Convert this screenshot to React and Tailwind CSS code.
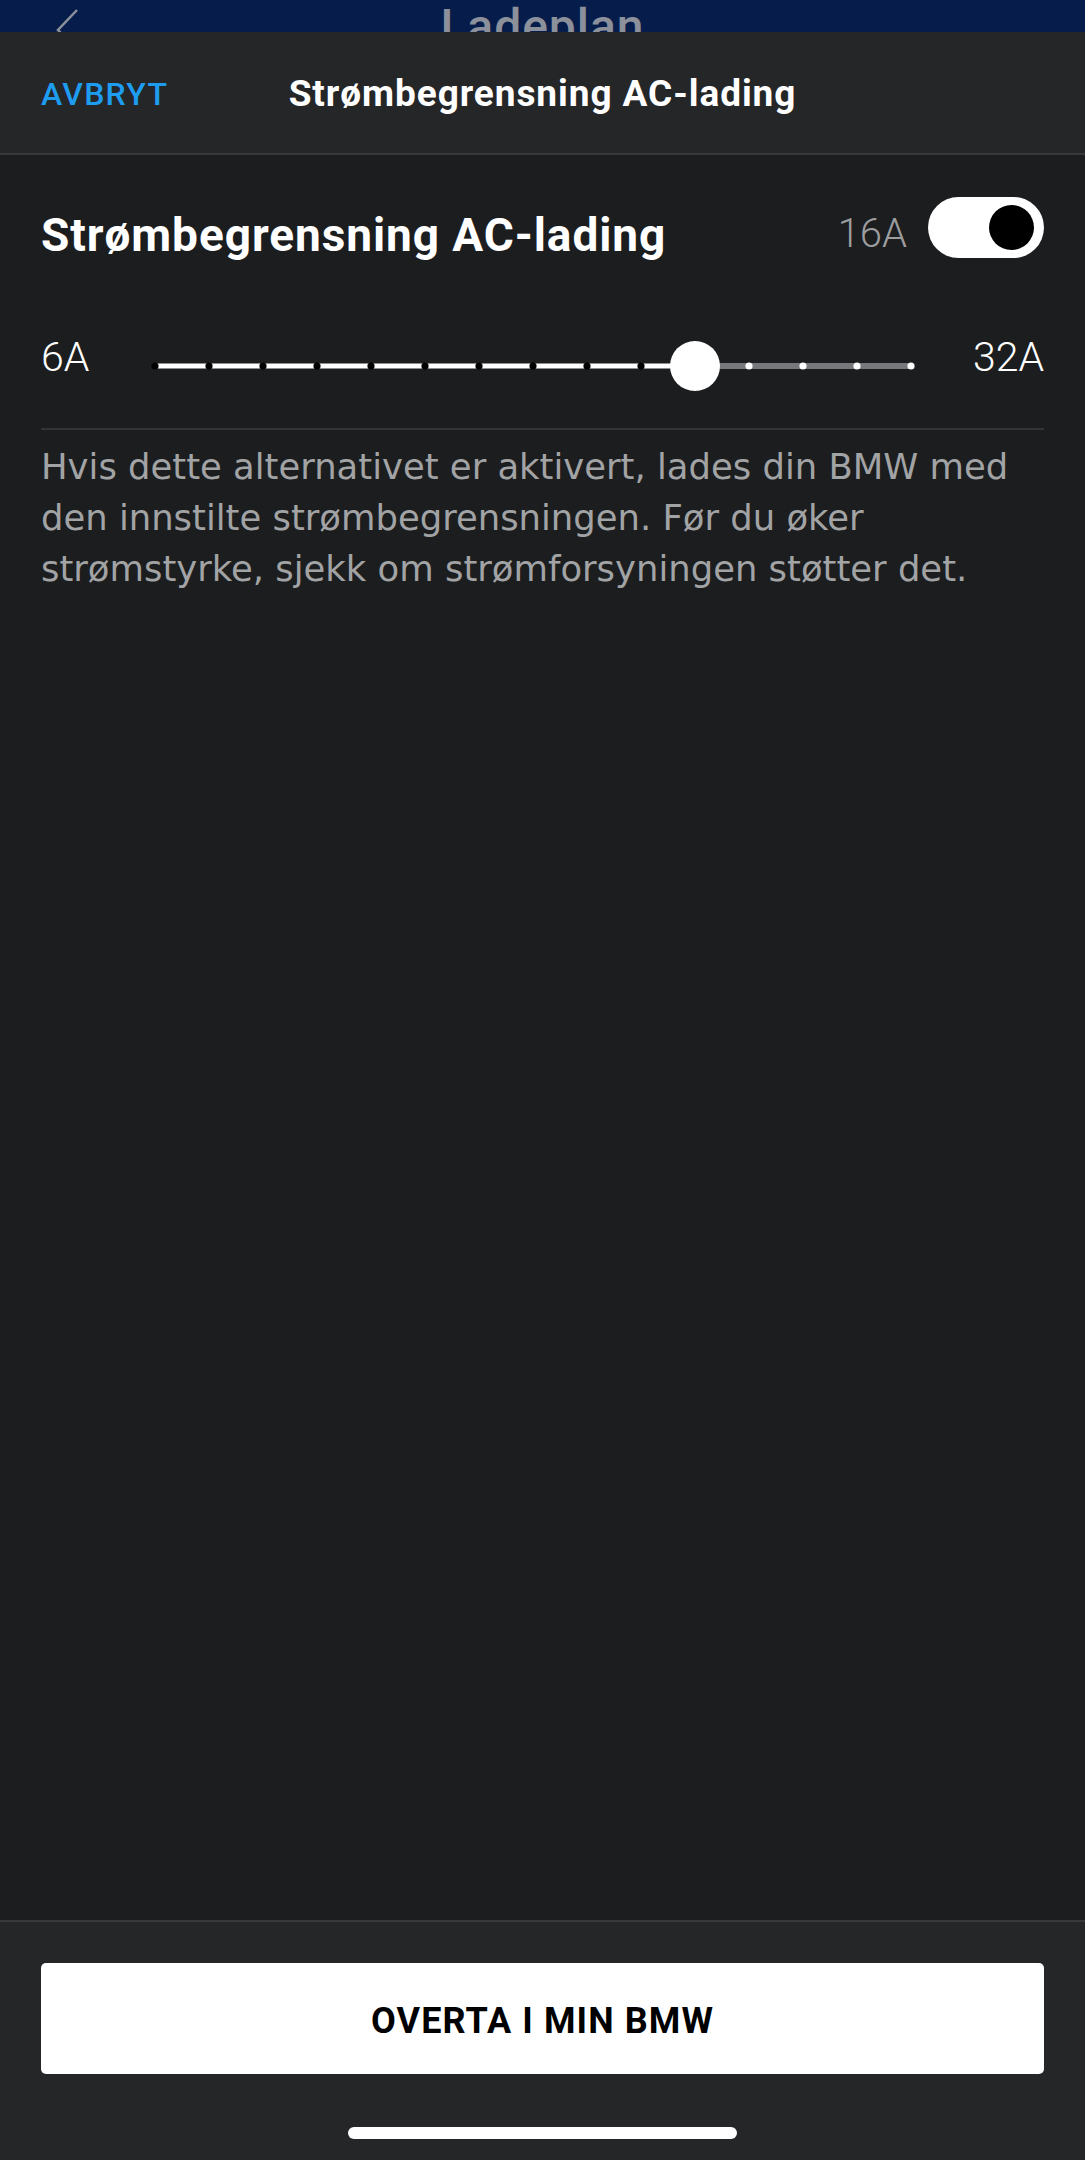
import React from 'react';

const TICKS = Array.from({ length: 15 }, (_, i) => 10 + i * 54);
const VALUE_IDX = 10;

const CurrentSlider = () => {
  const thumbX = TICKS[VALUE_IDX];
  return (
    <svg width="780" height="60" viewBox="0 0 780 60" className="block shrink-0">
      {/* filled part */}
      <line x1={TICKS[0]} y1="30" x2={thumbX} y2="30" stroke="#ffffff" strokeWidth="5" />
      {TICKS.slice(0, VALUE_IDX).map((x) => (
        <circle key={x} cx={x} cy="30" r="3.6" fill="#000000" />
      ))}
      {/* rest */}
      <line x1={thumbX} y1="30" x2={TICKS[14]} y2="30" stroke="#77787b" strokeWidth="6" />
      {TICKS.slice(VALUE_IDX + 1).map((x) => (
        <circle key={x} cx={x} cy="30" r="3.6" fill="#ffffff" />
      ))}
      <circle cx={thumbX} cy="30" r="25" fill="#ffffff" />
    </svg>
  );
};

const Toggle = () => (
  <div className="w-[116px] h-[61px] rounded-full bg-white flex items-center justify-end pr-[10px] shrink-0">
    <div className="w-[45px] h-[45px] rounded-full bg-black" />
  </div>
);

export default function App() {
  return (
    <div className="w-[1085px] h-[2160px] flex flex-col bg-[#061d4b] font-['Roboto','Liberation_Sans',sans-serif] overflow-hidden">
      {/* page behind the sheet */}
      <div className="h-[32px] shrink-0 overflow-hidden relative">
        <svg width="30" height="60" viewBox="0 0 30 60" className="absolute left-[50px] top-0">
          <polyline points="27,10 8,30 27,50" fill="none" stroke="#8b909a" strokeWidth="2.5" />
        </svg>
        <div className="text-center pt-[3px] text-[48px] leading-none font-medium tracking-[0.02em] text-[#8b909a]">Ladeplan</div>
      </div>

      <div className="flex-1 flex flex-col bg-[#1c1d1f]">
        {/* header */}
        <div className="h-[123px] shrink-0 grid grid-cols-[1fr_auto_1fr] items-center bg-[#252628] border-b-2 border-[#38393c]">
          <button className="justify-self-start pl-[41px] pt-[3px] text-[32px] font-medium text-[#1e9cf0] tracking-[0.04em]">
            AVBRYT
          </button>
          <h1 className="pt-[3px] text-[37px] font-bold tracking-[0.025em] text-white">Strømbegrensning AC-lading</h1>
          <div />
        </div>

        {/* content */}
        <div className="px-[41px] flex-1 flex flex-col">
          <div className="mt-[41px] flex items-center justify-between">
            <h2 className="pt-[16px] text-[46px] leading-none font-bold tracking-[0.02em] text-white">Strømbegrensning AC-lading</h2>
            <div className="flex items-center gap-[21px]">
              <span className="pt-[14px] text-[40px] leading-none font-light text-[#9d9d9f]">16A</span>
              <Toggle />
            </div>
          </div>

          <div className="mt-[78px] flex items-center">
            <span className="w-[104px] pb-[18px] text-[41px] leading-none font-light text-white">6A</span>
            <CurrentSlider />
            <span className="flex-1 pb-[18px] text-right text-[41px] leading-none font-light text-white">32A</span>
          </div>

          <div className="mt-[32px] h-[2px] bg-[#333437]" />

          <p className="mt-[11px] font-['DejaVu_Sans',sans-serif] text-[35.4px] leading-[51px] text-[#a2a3a5] whitespace-nowrap">
            Hvis dette alternativet er aktivert, lades din BMW med
            <br />
            den innstilte strømbegrensningen. Før du øker
            <br />
            strømstyrke, sjekk om strømforsyningen støtter det.
          </p>
        </div>

        {/* footer */}
        <div className="h-[240px] shrink-0 flex flex-col bg-[#252628] border-t-2 border-[#38393c]">
          <button className="mt-[41px] mx-[41px] h-[111px] rounded-[5px] bg-white pt-[4px] text-[36px] font-bold tracking-[0.03em] text-black">
            OVERTA I MIN BMW
          </button>
          <div className="mt-[53px] mx-auto w-[389px] h-[12px] rounded-full bg-white" />
        </div>
      </div>
    </div>
  );
}
